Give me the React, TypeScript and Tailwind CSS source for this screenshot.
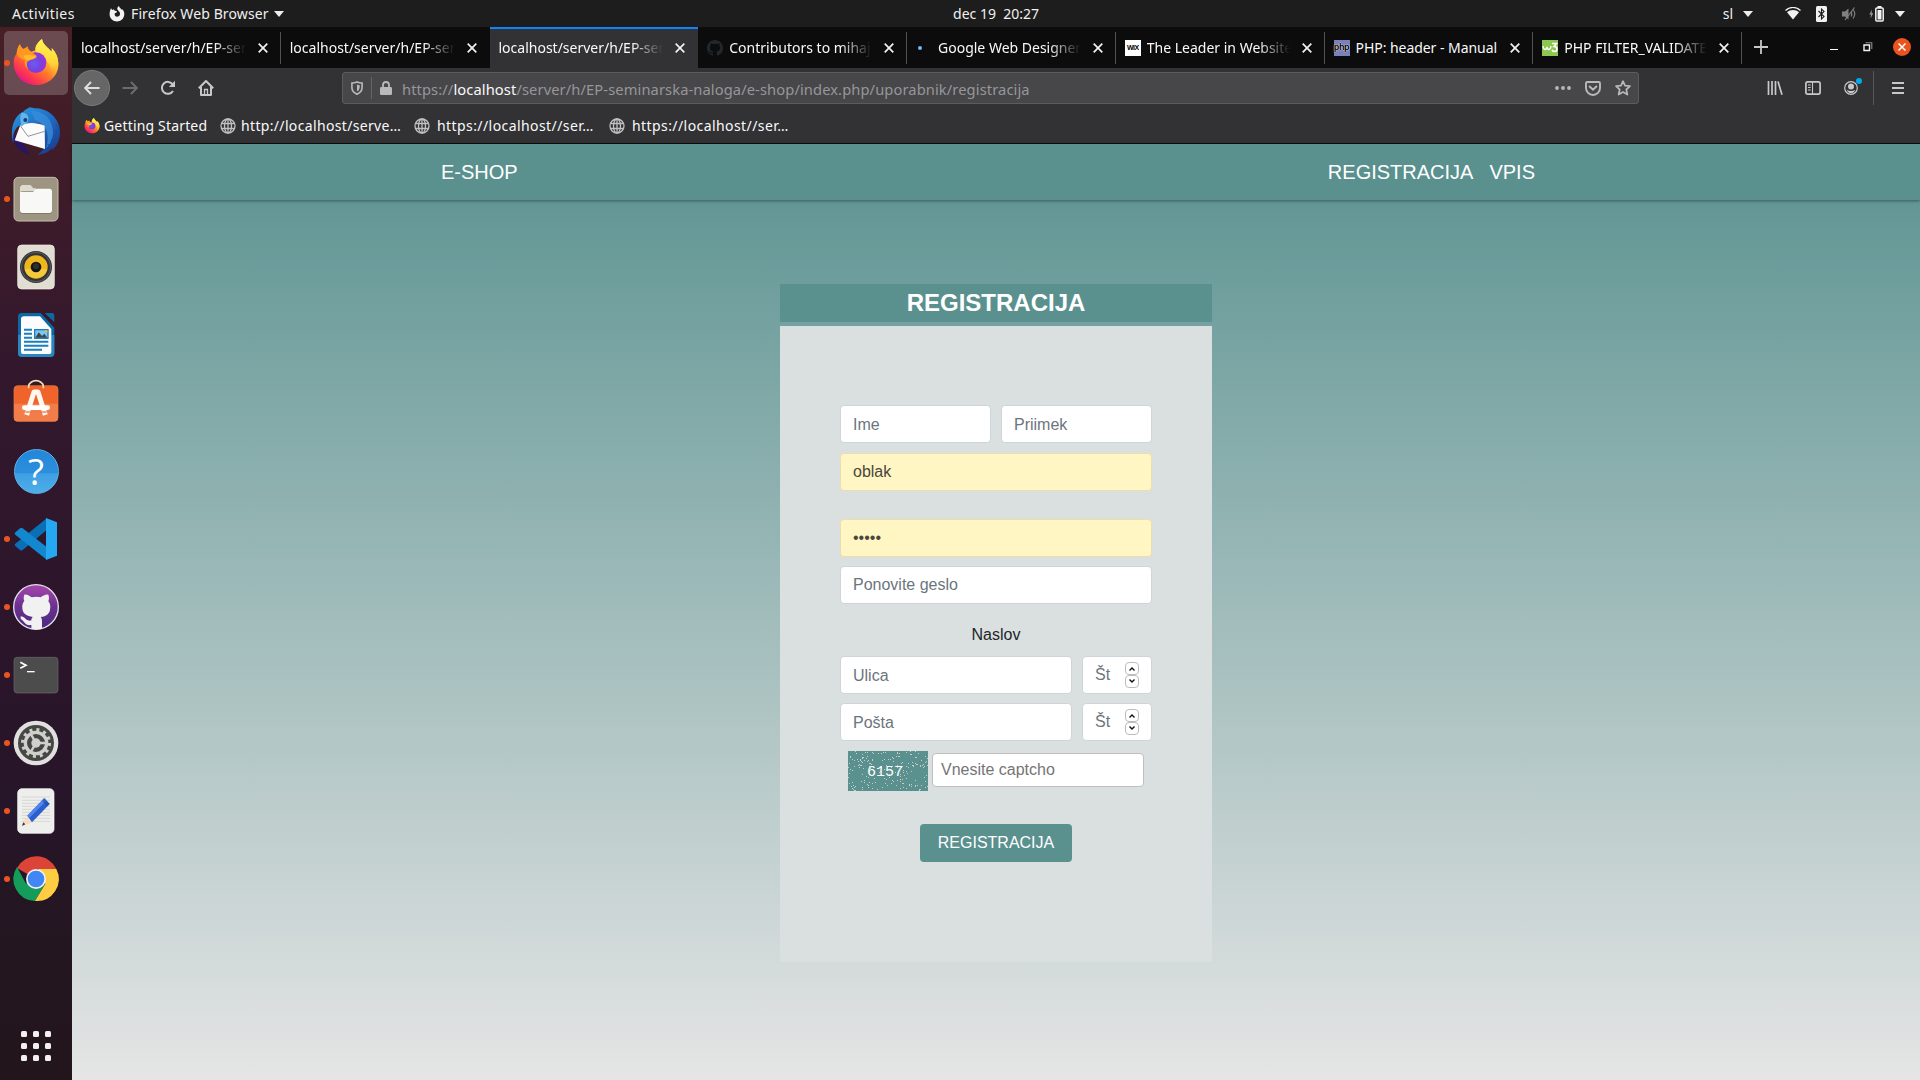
import React from "react";

const UI = "font-['Noto_Sans',sans-serif]";

/* ---------- Dock icons, drawn around the origin in a 144 unit box ---------- */

function DockSvg({ children }: { children: React.ReactNode }) {
  return (
    <svg viewBox="-72 -72 144 144" className="h-12 w-12 overflow-visible">
      {children}
    </svg>
  );
}

function FirefoxArt({ id }: { id: string }) {
  return (
    <>
      <defs>
        <linearGradient id={id + "a"} x1="0.85" y1="0.1" x2="0.2" y2="0.95">
          <stop offset="0" stopColor="#fff44f" />
          <stop offset="0.3" stopColor="#ffc02f" />
          <stop offset="0.55" stopColor="#ff7a2a" />
          <stop offset="0.8" stopColor="#ff3750" />
          <stop offset="1" stopColor="#e01587" />
        </linearGradient>
        <radialGradient id={id + "b"} cx="0.4" cy="0.55" r="0.6">
          <stop offset="0" stopColor="#6b5df0" />
          <stop offset="0.6" stopColor="#7a3fe0" />
          <stop offset="1" stopColor="#a030d8" />
        </radialGradient>
        <linearGradient id={id + "c"} x1="0" y1="0" x2="0" y2="1">
          <stop offset="0" stopColor="#fff450" />
          <stop offset="0.6" stopColor="#ffd63a" />
          <stop offset="1" stopColor="#ff9a2a" stopOpacity="0" />
        </linearGradient>
      </defs>
      <path
        d="M-48-56C-46-48-42-44-38-42C-33-43-29-45-26-50C-25-43-22-38-15-34L4-40C-4-48 4-62 18-72C20-54 38-46 46-34C48-38 48-42 47-45C60-32 68-14 67 6C66 42 36 66 0 66C-37 66-67 38-67 0C-67-14-64-22-58-28C-57-38-55-48-48-56Z"
        fill={`url(#${id}a)`}
      />
      <path
        d="M18-72C20-54 38-46 46-34C48-38 48-42 47-45C60-32 68-14 67 6C66 22 58 38 46 46C50 28 46 10 34-4C24-16 2-26-2-38C-4-50 6-62 18-72Z"
        fill={`url(#${id}c)`}
      />
      <circle cx="0" cy="-1" r="31" fill={`url(#${id}b)`} />
      <path
        d="M-48-56C-46-48-42-44-38-42C-33-43-29-45-26-50C-24-40-18-34-10-30C-4-26 2-24 2-20C2-12-14-10-22-7C-30-3-28 10-22 20C-34 12-36-2-32-8C-40-10-50-14-58-28C-57-38-55-48-48-56Z"
        fill="#ff9720"
      />
      <path d="M-38-22C-26-26-12-24 0-20C-4-12-16-11-23-7C-30-11-36-14-38-22Z" fill="#ffbd2c" />
    </>
  );
}

const FirefoxIcon = () => (
  <DockSvg>
    <FirefoxArt id="dock" />
  </DockSvg>
);

const ThunderbirdIcon = () => (
  <DockSvg>
    <defs>
      <linearGradient id="tb" x1="0" y1="0" x2="0.7" y2="1">
        <stop offset="0" stopColor="#2c9be0" />
        <stop offset="0.5" stopColor="#1f6fc6" />
        <stop offset="1" stopColor="#1c3f92" />
      </linearGradient>
    </defs>
    <path d="M-72 4C-74 44-44 68-18 71L-40 34Z" fill="#2a1560" />
    <path
      d="M-22-70C-16-72-8-70-6-68C30-70 62-46 70-12C76 14 66 44 48 58L50 50C40 62 22 70 4 71C14 64 22 58 24 50L26-12C20-24-10-30-34-12L-52-16C-70 0-68 14-68 36C-82-16-58-52-38-58C-34-64-28-66-22-70Z"
      fill="url(#tb)"
    />
    <path d="M-14-60C20-62 46-38 50-6C54 18 44 40 30 52C40 20 38-20-4-34Z" fill="#3a8ddb" opacity="0.75" />
    <path d="M60-20L71 0L58-2L70 18L54 12L64 34L46 26L52 46L34 40" fill="none" stroke="#17509f" strokeWidth="3" />
    <path d="M-48-16C-30-26 0-28 26-16L27 54L-64 28Z" fill="#fbfbfb" />
    <path d="M-46-14L-24 16L26 1" fill="none" stroke="#8f959b" strokeWidth="3" />
    <path d="M-44-54C-28-58-16-40-26-26L-46-12C-42-26-52-34-44-54Z" fill="#62b4ea" />
    <circle cx="-32" cy="-33" r="6" fill="#17406e" />
  </DockSvg>
);

const FilesIcon = () => (
  <DockSvg>
    <rect x="-66" y="-65" width="132" height="131" rx="13" fill="#9d9582" stroke="#c5bfae" strokeWidth="3" />
    <path d="M-42-42h24c5 0 6 10 14 10h4v10h-48v-14z" fill="#dedacd" />
    <rect x="-48" y="-24" width="96" height="69" rx="8" fill="#847c6b" />
    <path d="M-48-22H-10C-4-22-4-31 4-31H40Q48-31 48-23V34Q48 42 40 42H-40Q-48 42-48 34Z" fill="#f8f8f7" />
  </DockSvg>
);

const RhythmboxIcon = () => (
  <DockSvg>
    <rect x="-55" y="-66" width="110" height="132" rx="12" fill="#e2ddd2" stroke="#f4f1ea" strokeWidth="2" />
    <circle r="48" fill="#34343a" />
    <circle r="44" fill="none" stroke="#5b5b60" strokeWidth="3" />
    <circle r="35" fill="#efb71c" />
    <path d="M-34 6A35 35 0 0 0 34 6Z" fill="#f5cb3c" />
    <circle r="16" fill="#141414" />
    <circle r="9" cy="-2" fill="#2e2e2e" />
  </DockSvg>
);

const WriterIcon = () => (
  <DockSvg>
    <path d="M-44-66H14L55-22V54Q55 66 43 66H-42Q-54 66-54 54V-54Q-54-66-44-66Z" fill="#0b68a5" />
    <path d="M-54 0H55V54Q55 66 43 66H-42Q-54 66-54 54Z" fill="#2a86bf" />
    <path d="M-36-56H12L46-18V50Q46 57 38 57H-37Q-45 57-45 50V-48Q-45-56-36-56Z" fill="#fbfcfd" />
    <path d="M26-66H48Q55-66 55-58V-38Z" fill="#11679f" />
    <path d="M-36-16h24M-36-4h24M-36 8h24M-36 20h73M-36 32h73M-36 44h54" stroke="#1c7dbb" strokeWidth="6" />
    <rect x="-6" y="-18" width="44" height="30" fill="#1c7dbb" />
    <rect x="-2" y="-14" width="36" height="22" fill="#7fc4ea" />
    <path d="M-2 8L8-8L18 3L25-4L34 8Z" fill="#3f4448" />
    <path d="M26-14h8v8z" fill="#fbc02d" />
  </DockSvg>
);

const SoftwareIcon = () => (
  <DockSvg>
    <rect x="-66" y="-52" width="132" height="107" rx="11" fill="#f0632a" stroke="#e9803f" strokeWidth="2" />
    <path d="M-66 2H66V44Q66 55 55 55H-55Q-66 55-66 44Z" fill="#f37c4b" />
    <path d="M-22-44V-50C-22-60-10-67 0-67S22-60 22-50V-44" fill="none" stroke="#f3ddaf" strokeWidth="5" />
    <path d="M-28 36L-6-33H6L28 36" fill="none" stroke="#fff6ee" strokeWidth="15" strokeLinejoin="round" />
    <rect x="-42" y="7" width="84" height="14" rx="7" fill="#fff" />
    <path d="M-32 27H32" stroke="#f3794a" strokeWidth="4" />
  </DockSvg>
);

const HelpIcon = () => (
  <div className="flex h-[45px] w-[45px] items-center justify-center rounded-full border border-[#5fb0e6] bg-[linear-gradient(#2286da_0%,#2d8edd_54%,#3f9fe3_55%,#4daee9_100%)] pb-0.5 font-['Open_Sans',sans-serif] text-[37px] leading-none text-white">
    ?
  </div>
);

const VSCodeIcon = () => (
  <DockSvg>
    <path d="M-63 20L-48 33Q-44 36-40 33L33-28V-63L-62 14Q-66 17-63 20Z" fill="#0a6fb4" />
    <path d="M-63-19L-48-32Q-44-35-40-32L33 25V63L-62-13Q-66-16-63-19Z" fill="#1288cf" />
    <path d="M30-63L63-50V50L30 63Z" fill="#25a7f2" />
  </DockSvg>
);

const GithubDesktopIcon = () => (
  <DockSvg>
    <defs>
      <linearGradient id="gh" x1="0" y1="0" x2="0" y2="1">
        <stop offset="0" stopColor="#a648ad" />
        <stop offset="0.5" stopColor="#6a318f" />
        <stop offset="1" stopColor="#4a2a80" />
      </linearGradient>
    </defs>
    <circle r="67" fill="url(#gh)" stroke="#e4dfea" strokeWidth="4" />
    <path
      d="M-35-37C-28-39-18-33-13-29C-4-31 6-31 14-29C20-34 30-39 37-37C40-30 39-22 37-17C43-10 44-2 42 8C40 22 28 29 14 30C18 34 18 40 18 46V65A67 67 0 0 1-14 65V54C-34 57-34 42-46 36V28C-32 28-30 45-14 40C-14 36-13 32-9 30C-28 28-40 20-41 4C-42-6-40-12-35-18C-38-24-37-32-35-37Z"
      fill="#f1f1f2"
    />
  </DockSvg>
);

const TerminalIcon = () => (
  <DockSvg>
    <rect x="-66" y="-53" width="132" height="107" rx="10" fill="#4c4c4c" stroke="#6b6b6b" strokeWidth="2" />
    <path d="M-47-38L-30-29L-47-20" fill="none" stroke="#fff" strokeWidth="5" />
    <path d="M-27-10H-4" stroke="#fff" strokeWidth="4" />
  </DockSvg>
);

const SettingsIcon = () => (
  <DockSvg>
    <circle r="67" fill="#e0e0de" />
    <circle r="54" fill="#464644" />
    <circle r="32" fill="none" stroke="#cfcfcc" strokeWidth="10" />
    <circle r="40" fill="none" stroke="#cfcfcc" strokeWidth="10" strokeDasharray="9 11.944" />
    <path d="M12 0H30M-6-10L-15-26M-6 10L-15 26" stroke="#cfcfcc" strokeWidth="7" />
    <circle r="14" fill="#cfcfcc" />
  </DockSvg>
);

const GeditIcon = () => (
  <DockSvg>
    <rect x="-55" y="-67" width="109" height="134" rx="13" fill="#eeeeec" stroke="#fafafa" strokeWidth="2" />
    <path d="M-42-42h84M-42-32h84M-42-23h84M-42-14h84M-42-5h84M-42 4h84M-42 13h84M-42 22h84M-42 31h84" stroke="#cccccb" strokeWidth="2" />
    <path d="M-40 45L-32 20L-12 34Z" fill="#fbd9bb" />
    <path d="M-42 45L-38 34L-32 40Z" fill="#333" />
    <path d="M-26 14L24-38L41-21L-12 34Z" fill="#2a5fd0" />
    <path d="M-26 14L24-38L31-31L-20 21Z" fill="#5185ec" />
    <path d="M18-30L26-38L41-22L34-14Z" fill="#1c4bb4" opacity="0.6" />
  </DockSvg>
);

const ChromeIcon = () => (
  <DockSvg>
    <path d="M0 0L-57-33A66 66 0 0 1 61-30H0Z" fill="#dc4437" />
    <path d="M-57-36A66 66 0 0 0-3 66L27 14L0 0L-30 14Z" fill="#149d5a" />
    <path d="M61-30A66 66 0 0 1-3 66L28 14L6-30Z" fill="#ffcd41" />
    <circle r="30" fill="#f2f2f2" />
    <circle r="25" fill="#4286f5" />
  </DockSvg>
);

const dock = [
  { Icon: FirefoxIcon, on: true, active: true },
  { Icon: ThunderbirdIcon },
  { Icon: FilesIcon, on: true },
  { Icon: RhythmboxIcon },
  { Icon: WriterIcon },
  { Icon: SoftwareIcon },
  { Icon: HelpIcon },
  { Icon: VSCodeIcon, on: true },
  { Icon: GithubDesktopIcon, on: true },
  { Icon: TerminalIcon, on: true },
  { Icon: SettingsIcon, on: true },
  { Icon: GeditIcon, on: true },
  { Icon: ChromeIcon, on: true },
];

function Dock() {
  return (
    <aside className="flex w-[72px] shrink-0 flex-col bg-[linear-gradient(#471f25_0%,#3c1b2a_18%,#33182d_32%,#2b152a_60%,#27152a_72%,#231620_88%,#22151b_100%)] pt-0.5">
      {dock.map(({ Icon, on, active }, i) => (
        <div key={i} className="flex h-[68px] items-center justify-center">
          <div
            className={
              active
                ? "relative flex h-16 w-16 items-center justify-center rounded-[5px] bg-white/20"
                : "relative flex h-16 w-16 items-center justify-center"
            }
          >
            {on && <span className="absolute top-[29px] left-0 h-1.5 w-1.5 rounded-full bg-[#e95420]" />}
            <Icon />
          </div>
        </div>
      ))}
      <div className="mt-auto mb-[19px] ml-[21px] grid w-[30px] grid-cols-3 gap-1.5">
        {Array.from({ length: 9 }, (_, i) => (
          <span key={i} className="h-1.5 w-1.5 rounded-[1.5px] bg-[#f2f0f1]" />
        ))}
      </div>
    </aside>
  );
}

/* ---------- Top bar ---------- */

const Caret = () => (
  <svg width="10" height="6" viewBox="0 0 10 6">
    <path d="M0 0h10L5 6z" fill="#eee" />
  </svg>
);

function TopBar() {
  return (
    <header className="grid h-[27px] grid-cols-[1fr_auto_1fr] items-center bg-[#1d1d1d] text-[14px] leading-[27px] text-[#f0f0f0]">
      <div className="flex items-center">
        <span className="ml-3 w-[97px] tracking-[0.45px]">Activities</span>
        <svg width="16" height="16" viewBox="0 0 16 16" className="mr-1.5">
          <path
            d="M2 2.2L3.2 4L5 3.2L5.4 4.6L8 5.2L7.6 6.6L5.8 7.2C5.2 9 6.4 10.8 8.2 10.8C10.4 10.8 11.6 8.8 10.8 6.6C10.2 5 8 4 8.2 2.4C8.3 1.4 9.2.5 10 0C10.2 1.8 12 2.4 13 4L13.2 3C15 4.8 15.6 7 15.2 9.2C14.6 13 11.6 15.4 8 15.4C4 15.4.6 12.4.6 8.2C.6 5.8 1.2 4 2 2.2Z"
            fill="#f2f2f2"
          />
        </svg>
        <span className="w-[143px] tracking-[0.12px] whitespace-nowrap">Firefox Web Browser</span>
        <Caret />
      </div>
      <span className="ml-[72px] whitespace-pre">dec 19  20:27</span>
      <div className="flex items-center justify-end">
        <span className="mr-2.5">sl</span>
        <Caret />
        <svg width="16" height="13" viewBox="0 0 16 13" className="mr-[15px] ml-8">
          <path d="M.5 3.6C5-.6 11-.6 15.500 3.600" fill="none" stroke="#f2f2f2" strokeWidth="1.300" />
          <path d="M2 5.200C5.500 2.200 10.500 2.200 14 5.200L8 12.500Z" fill="#f2f2f2" />
        </svg>
        <svg width="11" height="16" viewBox="0 0 11 16" className="mr-[15px]">
          <rect width="11" height="16" rx="1.500" fill="#f2f2f2" />
          <path d="M2.500 5L8 10.600L5.500 13V3L8 5.400L2.500 11" fill="none" stroke="#1d1d1d" strokeWidth="1.100" />
        </svg>
        <svg width="15" height="14" viewBox="0 0 15 14" className="mr-3">
          <path d="M0 4.500h3L6.500 1.500v11L3 9.500H0z" fill="#808080" />
          <path d="M9 4.500Q10.500 7 9 9.500M11 2.500Q14.500 7 11 11.500M3 13L12.500.500" fill="none" stroke="#808080" strokeWidth="1.200" />
        </svg>
        <svg width="15" height="16" viewBox="0 0 15 16" className="mr-[11px]">
          <path d="M3 3.500L.3 8.600H2L1.500 12.500L4.300 7.300H2.600z" fill="#999" />
          <rect x="6.800" y="2" width="7.400" height="13" rx="1" fill="none" stroke="#f2f2f2" strokeWidth="1.500" />
          <rect x="8.500" y="0" width="4" height="2" fill="#f2f2f2" />
          <rect x="8.500" y="4" width="4" height="9.500" fill="#f2f2f2" />
        </svg>
        <div className="mr-[15px]">
          <Caret />
        </div>
      </div>
    </header>
  );
}

/* ---------- Firefox chrome ---------- */

const OctoMark = () => (
  <svg width="16" height="16" viewBox="0 0 16 16">
    <path
      fill="#23282d"
      d="M8 0C3.580 0 0 3.580 0 8c0 3.540 2.290 6.530 5.470 7.590.4.070.55-.17.55-.38 0-.19-.01-.82-.01-1.490-2.010.37-2.530-.49-2.690-.94-.09-.23-.48-.94-.82-1.130-.28-.15-.68-.52-.01-.53.63-.01 1.080.58 1.230.82.72 1.210 1.870.87 2.330.66.07-.52.28-.87.51-1.070-1.780-.2-3.640-.89-3.640-3.950 0-.87.31-1.590.82-2.150-.08-.2-.36-1.020.08-2.120 0 0 .67-.21 2.200.82.640-.18 1.320-.27 2-.27s1.360.09 2 .27c1.530-1.040 2.200-.82 2.200-.82.44 1.100.16 1.920.08 2.120.51.56.82 1.270.82 2.150 0 3.070-1.870 3.750-3.650 3.950.29.25.54.73.54 1.480 0 1.070-.01 1.930-.01 2.200 0 .21.15.46.55.38A8.010 8.010 0 0 0 16 8c0-4.420-3.580-8-8-8z"
    />
  </svg>
);

const tabs: { title: string; icon?: React.ReactNode; active?: boolean; fits?: boolean }[] = [
  { title: "localhost/server/h/EP-seminarska" },
  { title: "localhost/server/h/EP-seminarska" },
  { title: "localhost/server/h/EP-seminarska", active: true },
  { title: "Contributors to mihajov", icon: <OctoMark /> },
  {
    title: "Google Web Designer -",
    icon: (
      <span className="flex w-4">
        <span className="ml-0.5 h-1 w-1 rounded-full bg-[#6fb7ff]" />
      </span>
    ),
  },
  {
    title: "The Leader in Website C",
    icon: (
      <span className="flex h-4 w-4 items-center justify-center bg-white font-['Liberation_Sans',sans-serif] text-[7px] leading-4 font-bold tracking-[-0.6px] text-black">
        WIX
      </span>
    ),
  },
  {
    title: "PHP: header - Manual",
    fits: true,
    icon: (
      <span className="flex h-4 w-4 items-center justify-center bg-[#7c80b8] pb-0.5 font-['Liberation_Sans',sans-serif] text-[9px] leading-[14px] font-bold tracking-[-0.4px] text-black [text-shadow:0_0_1px_#fff,0_0_1px_#fff]">
        php
      </span>
    ),
  },
  {
    title: "PHP FILTER_VALIDATE_",
    icon: (
      <svg width="16" height="16" viewBox="0 0 16 16">
        <rect width="16" height="16" fill="#8cc751" />
        <path d="M1 6Q1.500 9.500 3 9.500T5 7Q5.500 9.500 7 9.500T9 6" fill="none" stroke="#fff" strokeWidth="1.300" />
        <path d="M10 3.500H14.500L12 6.500Q15 6.500 15 9T12.500 11.500Q10.800 11.500 10 10" fill="none" stroke="#fff" strokeWidth="1.600" />
      </svg>
    ),
  },
];

function TabStrip() {
  return (
    <div className="flex h-[41px] bg-[#0c0c0d]">
      <div className="flex w-[1670px]">
        {tabs.map((t, i) => (
          <div
            key={i}
            className={
              t.active
                ? "flex min-w-0 flex-1 border-t-2 border-[#0a84ff] bg-[#323234]"
                : "flex min-w-0 flex-1 pt-0.5"
            }
          >
            <div className="flex min-w-0 flex-1 items-center pb-0.5 pl-[9px]">
              {t.icon && <span className="mr-1.5 shrink-0">{t.icon}</span>}
              <span
                className={
                  t.fits
                    ? "min-w-0 flex-1 text-[14px] tracking-[-0.05px] whitespace-nowrap text-[#f9f9fa]"
                    : "min-w-0 flex-1 overflow-hidden text-[14px] whitespace-nowrap text-[#f9f9fa] [mask-image:linear-gradient(to_right,#000_calc(100%-32px),transparent_100%)]"
                }
              >
                {t.title}
              </span>
              <svg width="10" height="10" viewBox="0 0 10 10" className="mr-3 ml-[12px] shrink-0">
                <path d="M.7.7l8.600 8.600M9.300.7L.7 9.300" stroke="#f2f2f2" strokeWidth="1.700" />
              </svg>
            </div>
            {i !== 1 && i !== 2 ? <span className="mt-[3px] h-8 w-px shrink-0 bg-[#515152]" /> : <span className="w-px" />}
          </div>
        ))}
      </div>
      <div className="flex items-center pb-0.5">
        <svg width="16" height="16" viewBox="0 0 16 16" className="ml-[11px]">
          <path d="M8 1v14M1 8h14" stroke="#c8c8c9" strokeWidth="1.800" />
        </svg>
        <span className="mt-1.5 ml-[61px] h-px w-2 bg-white" />
        <svg width="10" height="10" viewBox="0 0 10 10" className="ml-[25px]">
          <path d="M1 3h5.500v5.500H1z" fill="none" stroke="#f2f2f2" strokeWidth="1.400" />
          <path d="M2.500.800H8.800V7" fill="none" stroke="#8a8a8a" strokeWidth="1.100" />
        </svg>
        <svg width="18" height="18" viewBox="0 0 18 18" className="ml-5">
          <circle cx="9" cy="9" r="9" fill="#e95420" />
          <path d="M5.500 5.500l7 7M12.500 5.500l-7 7" stroke="#fff" strokeWidth="1.500" />
        </svg>
      </div>
    </div>
  );
}

function NavBar() {
  return (
    <div className="flex h-10 items-center text-[#c5c5c6]">
      <span className="ml-0.5 flex h-9 w-9 items-center justify-center rounded-full border border-[#7a7a7b] bg-[#666667]">
        <svg width="16" height="14" viewBox="0 0 16 14">
          <path d="M15.500 7H1.500M7 1L1.200 7L7 13" fill="none" stroke="#dedede" strokeWidth="1.900" />
        </svg>
      </span>
      <svg width="16" height="14" viewBox="0 0 16 14" className="ml-3">
        <path d="M.5 7H14.500M9 1L14.800 7L9 13" fill="none" stroke="#6c6c6e" strokeWidth="1.900" />
      </svg>
      <svg width="16" height="16" viewBox="0 0 16 16" className="ml-[22px]">
        <path d="M13 11A6 6 0 1 1 12.800 4.400" fill="none" stroke="#c8c8c9" strokeWidth="2" />
        <path d="M15 .8V7H8.800z" fill="#c8c8c9" />
      </svg>
      <svg width="16" height="16" viewBox="0 0 16 16" className="ml-[22px]">
        <path d="M.8 8.300L8 1L15.200 8.300M3 7V15H13V7" fill="none" stroke="#c8c8c9" strokeWidth="2" strokeLinejoin="round" />
        <path d="M6.500 15V9.500h3V15" fill="none" stroke="#c8c8c9" strokeWidth="1.300" />
      </svg>
      <div className="ml-32 flex h-8 w-[1297px] items-center rounded-[3px] border border-[#5c5c5e] bg-[#474749]">
        <svg width="12" height="14" viewBox="0 0 12 14" className="ml-2">
          <path d="M6 .9Q8.500 1.900 11.100 2V6.500Q11.100 11 6 13.200Q.9 11 .9 6.500V2Q3.500 1.900 6 .9Z" fill="none" stroke="#b9b9ba" strokeWidth="1.600" />
          <path d="M6 3.500Q7.500 4.200 8.700 4.300V6.500Q8.700 9 6 10.400Z" fill="#b9b9ba" />
        </svg>
        <span className="ml-2 h-[22px] w-px bg-[#66666a]" />
        <svg width="12" height="14" viewBox="0 0 12 14" className="ml-2">
          <path d="M3 7V4Q3 1 6 1T9 4V7" fill="none" stroke="#b9b9ba" strokeWidth="1.800" />
          <rect y="6" width="12" height="8" rx="1.200" fill="#b9b9ba" />
        </svg>
        <span className="ml-[10px] flex-1 pt-0.5 text-[14.7px] leading-6 tracking-[0.1px] text-[#96969a]">
          https://<span className="text-[#f9f9fa]">localhost</span>/server/h/EP-seminarska-naloga/e-shop/index.php/uporabnik/registracija
        </span>
        <svg width="16" height="4" viewBox="0 0 16 4" className="mr-3.5">
          <circle cx="2" cy="2" r="1.900" fill="#b9b9ba" />
          <circle cx="8" cy="2" r="1.900" fill="#b9b9ba" />
          <circle cx="14" cy="2" r="1.900" fill="#b9b9ba" />
        </svg>
        <svg width="16" height="15" viewBox="0 0 16 15" className="mr-3.5">
          <path d="M1 2.200Q1 1 2.200 1H13.800Q15 1 15 2.200V7A7 7 0 0 1 1 7Z" fill="none" stroke="#b9b9ba" strokeWidth="1.900" />
          <path d="M4.600 5.500L8 8.800L11.400 5.500" fill="none" stroke="#b9b9ba" strokeWidth="1.900" strokeLinecap="round" />
        </svg>
        <svg width="16" height="16" viewBox="0 0 16 16" className="mr-[7px]">
          <path d="M8 1.200L10 5.700L15 6.200L11.300 9.500L12.400 14.600L8 12L3.600 14.600L4.700 9.500L1 6.200L6 5.700Z" fill="none" stroke="#b9b9ba" strokeWidth="1.700" strokeLinejoin="round" />
        </svg>
      </div>
      <svg width="16" height="14" viewBox="0 0 16 14" className="ml-32">
        <path d="M1.500 0V14M5 0V14M8.500 0V14M11 .5L15 13.700" stroke="#c8c8c9" strokeWidth="1.700" fill="none" />
      </svg>
      <svg width="16" height="14" viewBox="0 0 16 14" className="ml-[22px]">
        <rect x=".9" y=".9" width="14.200" height="12.200" rx="1.800" fill="none" stroke="#c8c8c9" strokeWidth="1.700" />
        <path d="M7.500 1V13M3 4h2.700M3 6.500h2.700M3 9h2.700" stroke="#c8c8c9" strokeWidth="1.100" />
      </svg>
      <div className="relative ml-[23px]">
        <svg width="14" height="14" viewBox="0 0 14 14">
          <circle cx="7" cy="7" r="6.300" fill="none" stroke="#c8c8c9" strokeWidth="1.200" />
          <circle cx="7" cy="5.500" r="3" fill="#c8c8c9" />
          <path d="M2.800 9Q7 10.800 11.200 9Q10.300 12 7 12.200Q3.700 12 2.800 9Z" fill="#c8c8c9" />
        </svg>
        <span className="absolute -top-[3px] -right-1 h-1.5 w-1.5 rounded-full bg-[#00a8f0]" />
      </div>
      <span className="ml-[15px] h-[34px] w-px bg-[#58585a]" />
      <svg width="12" height="12" viewBox="0 0 12 12" className="ml-[18px]">
        <path d="M0 1h12M0 6h12M0 11h12" stroke="#c8c8c9" strokeWidth="1.800" />
      </svg>
    </div>
  );
}

const Globe = () => (
  <svg width="16" height="16" viewBox="0 0 16 16" fill="none" stroke="#c0c0c1" strokeWidth="1.300">
    <circle cx="8" cy="8" r="7" />
    <ellipse cx="8" cy="8" rx="3.500" ry="7" />
    <path d="M1.500 5.500h13M1.500 10.500h13M8 1v14" />
  </svg>
);

function Bookmarks() {
  return (
    <div className="flex h-9 items-center border-b border-[#0c0c0d] text-[14px] whitespace-nowrap text-[#f9f9fa]">
      <svg width="16" height="16" viewBox="-72 -72 144 144" className="ml-3">
        <FirefoxArt id="bm" />
      </svg>
      <span className="ml-1 w-[116px] tracking-[0.17px]">Getting Started</span>
      <Globe />
      <span className="ml-[5px] w-[173px] tracking-[0.34px]">http://localhost/serve…</span>
      <Globe />
      <span className="ml-[7px] w-[172px] tracking-[0.42px]">https://localhost//ser…</span>
      <Globe />
      <span className="ml-[7px] tracking-[0.42px]">https://localhost//ser…</span>
    </div>
  );
}

/* ---------- Page ---------- */

const inputBase =
  "block h-[38px] w-full min-w-0 rounded border px-3 text-base leading-6 outline-none placeholder:text-[#6c757d] placeholder:opacity-100";
const plain = inputBase + " border-[#ced4da] bg-white text-[#495057]";
const filled = inputBase + " border-[#eedcae] bg-[#fff6c4] text-[#4a463c] py-1.5";

function NumberField() {
  return (
    <div className="flex h-[38px] w-[70px] shrink-0 items-center rounded border border-[#ced4da] bg-white pr-3 pl-3 text-[#6c757d]">
      <span className="flex-1">Št</span>
      <div className="flex w-3.5 flex-col">
        <span className="flex h-[13px] items-center justify-center rounded border border-[#bdbdbd]">
          <svg width="6" height="4" viewBox="0 0 6 4">
            <path d="M.5 3.500L3 1L5.500 3.500" fill="none" stroke="#111" strokeWidth="1.400" />
          </svg>
        </span>
        <span className="flex h-[13px] items-center justify-center rounded border border-[#bdbdbd] pb-0.5">
          <svg width="6" height="4" viewBox="0 0 6 4">
            <path d="M.5.500L3 3L5.500.500" fill="none" stroke="#111" strokeWidth="1.400" />
          </svg>
        </span>
      </div>
    </div>
  );
}

/* Deterministic speckles for the captcha tile */
const speckles = (() => {
  let s = 6157;
  const next = () => (s = (s * 16807) % 2147483647) / 2147483647;
  return Array.from({ length: 190 }, () => [Math.floor(next() * 80), Math.floor(next() * 40)]);
})();

function Captcha() {
  return (
    <svg width="80" height="40" viewBox="0 0 80 40" shapeRendering="crispEdges" className="bg-[#5a918f]">
      {speckles.map(([x, y], i) => (
        <rect key={i} x={x} y={y} width="1" height="1" fill="#c4cccb" />
      ))}
      <text x="19" y="25" fill="#fff" fontSize="15" fontFamily="'Liberation Mono', monospace">
        6157
      </text>
    </svg>
  );
}

function Page() {
  return (
    <main className="flex min-h-0 flex-1 flex-col bg-[linear-gradient(#5a9290,#e5e5e5)] font-['Liberation_Sans',sans-serif] text-base">
      <nav className="h-14 shrink-0 bg-[#5a918f] shadow-[0_1px_3px_rgba(0,0,0,0.4)]">
        <div className="mx-auto flex h-full w-[1110px] items-center justify-between pr-4 text-xl text-white">
          <span>E-SHOP</span>
          <div className="flex gap-4">
            <span>REGISTRACIJA</span>
            <span>VPIS</span>
          </div>
        </div>
      </nav>
      <section className="mx-auto mt-[84px] w-[432px]">
        <h1 className="mb-1 h-[38px] bg-[#5a918f] text-center text-2xl leading-[37px] font-bold text-white">REGISTRACIJA</h1>
        <form className="flex h-[636px] flex-col bg-[#dae0df] px-[60px] pt-[79px]">
          <div className="flex gap-2.5">
            <input className={plain + " pt-[7px] pb-[5px]"} placeholder="Ime" />
            <input className={plain + " pt-[7px] pb-[5px]"} placeholder="Priimek" />
          </div>
          <input className={filled + " mt-2.5"} defaultValue="oblak" />
          <input className={filled + " mt-7"} defaultValue="•••••" />
          <input className={plain + " mt-[9px] py-1.5"} placeholder="Ponovite geslo" />
          <p className="mt-[19px] mb-[9px] text-center leading-6 text-[#212529]">Naslov</p>
          <div className="flex gap-2.5">
            <input className={plain + " pt-[7px] pb-[5px]"} placeholder="Ulica" />
            <NumberField />
          </div>
          <div className="mt-[9px] flex gap-2.5">
            <input className={plain + " pt-[7px] pb-[5px]"} placeholder="Pošta" />
            <NumberField />
          </div>
          <div className="mt-2.5 flex items-start gap-1 px-2">
            <Captcha />
            <input
              className="mt-0.5 block h-[34px] w-[212px] rounded border border-[#bfbfbf] bg-white px-2 outline-none placeholder:text-[#757575] placeholder:opacity-100"
              placeholder="Vnesite captcho"
            />
          </div>
          <button type="button" className="mt-[33px] h-[38px] w-[152px] self-center rounded bg-[#5a918f] text-white">
            REGISTRACIJA
          </button>
        </form>
      </section>
    </main>
  );
}

export default function App() {
  return (
    <div className={"flex h-[1080px] w-[1920px] flex-col overflow-hidden " + UI}>
      <TopBar />
      <div className="flex min-h-0 flex-1">
        <Dock />
        <div className="flex min-w-0 flex-1 flex-col bg-[#323234]">
          <TabStrip />
          <NavBar />
          <Bookmarks />
          <Page />
        </div>
      </div>
    </div>
  );
}
